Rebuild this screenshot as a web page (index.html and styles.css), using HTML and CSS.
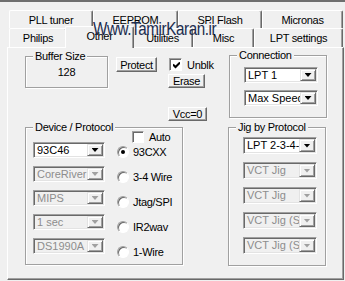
FILE: index.html
```html
<html>
  <head>
    <title>Other</title>
    <link rel="stylesheet" href="styles.css">
  </head>
  <body>
    <div class="topbar"></div>

    <div class="tabs">
      <div class="tab-row">
        <div class="tab t-pll">PLL tuner</div>
        <div class="tab t-eeprom">EEPROM</div>
        <div class="tab t-spi">SPI Flash</div>
        <div class="tab t-micronas">Micronas</div>
      </div>
      <div class="tab-row front">
        <div class="tab t-philips">Philips</div>
        <div class="tab t-other active">Other</div>
        <div class="tab t-utilities">Utilities</div>
        <div class="tab t-misc">Misc</div>
        <div class="tab t-lpt">LPT settings</div>
      </div>
    </div>

    <div class="panel">
      <div class="top-row">
        <div class="group buffer">
          <span class="group-title">Buffer Size</span>
          <span class="buffer-value">128</span>
        </div>

        <div class="mid">
          <div class="mid-row">
            <div class="btn protect">Protect</div>
            <div class="check checked">
              <svg width="7" height="7" viewBox="0 0 7 7"><path d="M0 2.5 L2.5 5 L7 0.5" fill="none" stroke="#000" stroke-width="2"/></svg>
            </div>
            <span class="check-label">Unblk</span>
          </div>
          <div class="btn erase">Erase</div>
          <div class="btn vcc">Vcc=0</div>
        </div>

        <div class="group connection">
          <span class="group-title">Connection</span>
          <div class="combo-list">
            <div class="combo"><span class="combo-text">LPT 1</span><span class="combo-btn"><i class="arrow"></i></span></div>
            <div class="combo"><span class="combo-text">Max Speed</span><span class="combo-btn"><i class="arrow"></i></span></div>
          </div>
        </div>
      </div>

      <div class="bottom-row">
        <div class="group device">
          <span class="group-title">Device / Protocol</span>
          <div class="combo-list device-combos">
            <div class="combo"><span class="combo-text">93C46</span><span class="combo-btn"><i class="arrow"></i></span></div>
            <div class="combo disabled"><span class="combo-text">CoreRiver</span><span class="combo-btn"><i class="arrow"></i></span></div>
            <div class="combo disabled"><span class="combo-text">MIPS</span><span class="combo-btn"><i class="arrow"></i></span></div>
            <div class="combo disabled"><span class="combo-text">1 sec</span><span class="combo-btn"><i class="arrow"></i></span></div>
            <div class="combo disabled"><span class="combo-text">DS1990A</span><span class="combo-btn"><i class="arrow"></i></span></div>
          </div>
          <div class="options">
            <div class="auto-row">
              <div class="check"></div>
              <span class="check-label">Auto</span>
            </div>
            <div class="radio-row"><span class="radio selected"></span><span>93CXX</span></div>
            <div class="radio-row"><span class="radio"></span><span>3-4 Wire</span></div>
            <div class="radio-row"><span class="radio"></span><span>Jtag/SPI</span></div>
            <div class="radio-row"><span class="radio"></span><span>IR2wav</span></div>
            <div class="radio-row"><span class="radio"></span><span>1-Wire</span></div>
          </div>
        </div>

        <div class="group jig">
          <span class="group-title">Jig by Protocol</span>
          <div class="combo-list jig-combos">
            <div class="combo"><span class="combo-text">LPT 2-3-4-5</span><span class="combo-btn"><i class="arrow"></i></span></div>
            <div class="combo disabled"><span class="combo-text">VCT Jig</span><span class="combo-btn"><i class="arrow"></i></span></div>
            <div class="combo disabled"><span class="combo-text">VCT Jig</span><span class="combo-btn"><i class="arrow"></i></span></div>
            <div class="combo disabled"><span class="combo-text">VCT Jig (SPI)</span><span class="combo-btn"><i class="arrow"></i></span></div>
            <div class="combo disabled"><span class="combo-text">VCT Jig (SPI)</span><span class="combo-btn"><i class="arrow"></i></span></div>
          </div>
        </div>
      </div>
    </div>

    <div class="watermark">Www.TamirKaran.ir</div>
  </body>
</html>
```

FILE: styles.css
```css
* {
    box-sizing: border-box;
}

body {
    margin: 0;
    width: 345px;
    height: 281px;
    overflow: hidden;
    position: relative;
    background-color: #f0f0f0;
    font-family: "Liberation Sans", Arial, sans-serif;
    font-size: 11px;
    letter-spacing: -0.3px;
    color: #000;
}

.topbar {
    height: 2px;
    background-color: #6e6e6e;
}

/* tabs */
.tabs {
    padding: 8px 0 0 9px;
}

.tab-row {
    display: flex;
    height: 18px;
}

.tab-row.front {
    height: 19px;
}

.tab {
    display: flex;
    align-items: center;
    justify-content: center;
    white-space: nowrap;
    background-color: #f0f0f0;
    border-top: 1px solid #fff;
    border-left: 1px solid #fff;
    border-right: 1px solid #696969;
    box-shadow: inset -1px 0 #a0a0a0;
    border-radius: 2px 2px 0 0;
}

.t-pll { width: 84px; }
.t-eeprom { width: 85px; }
.t-spi { width: 84px; }
.t-micronas { width: 81px; }

.t-philips { width: 58px; }
.t-other { width: 65px; }
.t-utilities { width: 61px; }
.t-misc { width: 61px; }
.t-lpt { width: 89px; }

.tab.active {
    position: relative;
    z-index: 2;
    width: 69px;
    height: 22px;
    margin: -2px -2px 0 -2px;
    padding-bottom: 3px;
}

/* page */
.panel {
    margin-left: 7px;
    width: 337px;
    height: 233px;
    border: 1px solid;
    border-color: #fff #696969 #696969 #fff;
    box-shadow: inset -1px -1px #a0a0a0;
}

.top-row {
    display: flex;
    align-items: flex-start;
    height: 79px;
}

.bottom-row {
    display: flex;
    align-items: flex-start;
}

.group {
    position: relative;
    border: 1px solid #a0a0a0;
    box-shadow: 1px 1px 0 #fff, inset 1px 1px 0 #fff;
}

.group-title {
    position: absolute;
    top: -7px;
    left: 7px;
    padding: 0 2px;
    line-height: 13px;
    background-color: #f0f0f0;
    white-space: nowrap;
}

.buffer {
    margin: 8px 0 0 17px;
    width: 83px;
    height: 32px;
    display: flex;
    align-items: center;
    justify-content: center;
}

.mid {
    margin: 9px 0 0 8px;
    width: 100px;
}

.mid-row {
    display: flex;
    align-items: center;
}

.btn {
    display: flex;
    align-items: center;
    justify-content: center;
    flex-shrink: 0;
    background-color: #f0f0f0;
    border: 1px solid;
    border-color: #fff #696969 #696969 #fff;
    box-shadow: inset -1px -1px #a0a0a0;
}

.protect {
    width: 41px;
    height: 15px;
}

.erase {
    width: 37px;
    height: 14px;
    margin: 2px 0 0 52px;
}

.vcc {
    width: 39px;
    height: 14px;
    margin: 19px 0 0 52px;
}

.check {
    width: 13px;
    height: 13px;
    flex-shrink: 0;
    display: flex;
    align-items: center;
    justify-content: center;
    background-color: #fff;
    border: 1px solid;
    border-color: #a0a0a0 #fff #fff #a0a0a0;
    box-shadow: inset 1px 1px #696969;
}

.mid-row .check {
    margin-left: 12px;
}

.check svg {
    margin: 1px 0 0 1px;
}

.check-label {
    margin-left: 5px;
}

.connection {
    margin: 7px 0 0 13px;
    width: 98px;
    height: 63px;
    padding: 11px 0 0 14px;
}

.combo-list {
    display: flex;
    flex-direction: column;
    gap: 7px;
}

.combo {
    display: flex;
    width: 74px;
    height: 16px;
    padding: 1px;
    background-color: #fff;
    border: 1px solid;
    border-color: #a0a0a0 #fff #fff #a0a0a0;
    box-shadow: inset 1px 1px #696969, inset -1px -1px #e3e3e3;
}

.combo-text {
    flex: 1;
    overflow: hidden;
    white-space: nowrap;
    padding-left: 2px;
    line-height: 12px;
    letter-spacing: 0;
}

.combo-btn {
    width: 16px;
    flex-shrink: 0;
    display: flex;
    align-items: center;
    justify-content: center;
    background-color: #f0f0f0;
    border: 1px solid;
    border-color: #e3e3e3 #696969 #696969 #e3e3e3;
    box-shadow: inset 1px 1px #fff, inset -1px -1px #a0a0a0;
}

.arrow {
    width: 7px;
    height: 4px;
    background-color: #000;
    clip-path: polygon(0 0, 100% 0, 50% 100%);
}

.combo.disabled {
    background-color: #f0f0f0;
    color: #8d8d8d;
}

.combo.disabled .arrow {
    background-color: #a0a0a0;
}

.device {
    margin-left: 17px;
    width: 158px;
    height: 138px;
    display: flex;
    padding-left: 7px;
}

.device-combos {
    margin-top: 14px;
    gap: 8px;
}

.device-combos .combo {
    width: 72px;
}

.options {
    margin-left: 12px;
    display: flex;
    flex-direction: column;
    gap: 13px;
}

.auto-row {
    display: flex;
    align-items: center;
    margin: 3px 0 -10px 15px;
}

.auto-row .check {
    width: 12px;
    height: 12px;
}

.radio-row {
    display: flex;
    align-items: center;
    height: 12px;
    gap: 4px;
    white-space: nowrap;
}

.radio {
    position: relative;
    width: 12px;
    height: 12px;
    border-radius: 50%;
    background-color: #fff;
    border: 1px solid;
    border-color: #a0a0a0 #fff #fff #a0a0a0;
    box-shadow: inset 1px 1px #696969;
}

.radio.selected::after {
    content: "";
    position: absolute;
    left: 3px;
    top: 3px;
    width: 4px;
    height: 4px;
    border-radius: 50%;
    background-color: #000;
}

.jig {
    margin-left: 45px;
    width: 98px;
    height: 139px;
    padding: 9px 0 0 14px;
}

.jig-combos {
    gap: 8px;
}

.jig-combos .combo {
    height: 17px;
}

.watermark {
    position: absolute;
    z-index: 5;
    left: 93px;
    top: 18px;
    font-size: 19px;
    letter-spacing: -0.5px;
    color: #1c2d4f;
    transform: scaleX(0.8);
    transform-origin: left top;
    white-space: nowrap;
}
```
